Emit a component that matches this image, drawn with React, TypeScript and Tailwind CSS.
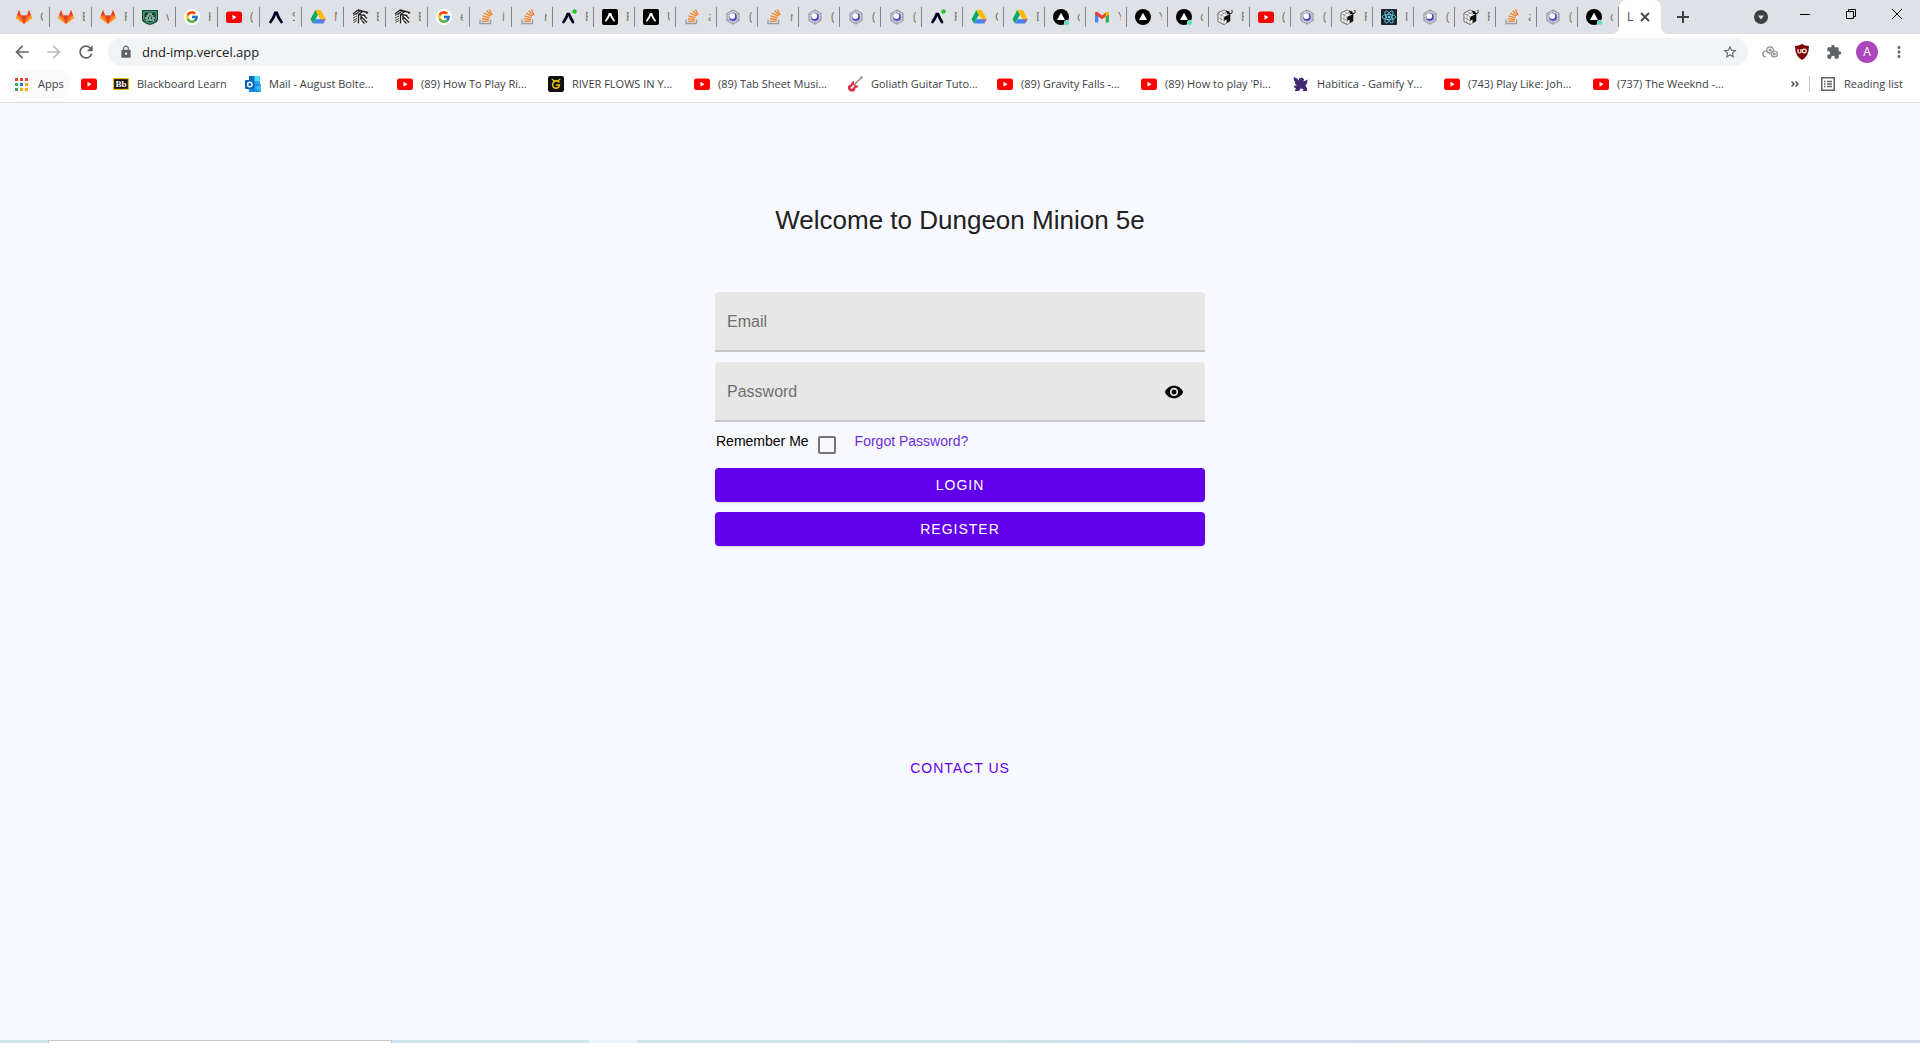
import type { ReactNode } from "react";
import { FcGoogle } from "react-icons/fc";
import { MdArrowBack, MdArrowForward, MdRefresh, MdLock, MdStarBorder, MdExtension, MdMoreVert, MdVisibility } from "react-icons/md";

type IconName =
  | "gitlab" | "shield" | "google" | "youtube" | "expo" | "expoDot" | "expoDark" | "drive" | "notebook"
  | "stack" | "hex" | "vercel" | "vercelDot" | "gmail" | "cube" | "react" | "blackboard" | "outlook"
  | "gtabs" | "guitar" | "griffin";

const drawings: Record<Exclude<IconName, "google">, ReactNode> = {
  gitlab: (
    <>
      <path d="M8 15 L0 9 L3 1 L5 6.5 H11 L13 1 L16 9 Z" fill="#fc6d26" />
      <path d="M8 15 L5 6.5 H11 Z" fill="#e24329" />
      <path d="M0 9 L1 6.5 L8 15 Z M16 9 L15 6.5 L8 15 Z" fill="#fca326" />
      <path d="M3 1 L5 6.5 H1 Z M13 1 L11 6.5 H15 Z" fill="#e24329" />
    </>
  ),
  shield: (
    <>
      <path d="M0 1 H16 V11 Q15 14 8 16 Q1 14 0 11 Z" fill="#064e32" />
      <path d="M1.800 2.800 H14.200 V10.500 Q13 12.800 8 14.200 Q3 12.800 1.800 10.500 Z" fill="none" stroke="#cfe0d8" strokeWidth=".6" />
      <path d="M6 5 H10 M4.500 7 H7.500 M8.500 7 H11.500 M3 9 H6 M7 9 H9 M10 9 H13 M4 11 H12" stroke="#fff" strokeWidth="1.200" />
    </>
  ),
  youtube: (
    <>
      <rect x="0" y="2.500" width="16" height="11.500" rx="2.500" fill="#f00" />
      <path d="M6.500 5.700 L10.500 8.200 L6.500 10.700 Z" fill="#fff" />
    </>
  ),
  expo: <path d="M2.500 13 Q6 8.500 7.200 4 H8.800 Q10 8.500 13.500 13" fill="none" stroke="#000020" strokeWidth="2.800" strokeLinecap="round" />,
  expoDot: (
    <>
      <path d="M2.500 13 Q5.500 9 6.700 5 H8 Q9.500 9 12 13" fill="none" stroke="#000020" strokeWidth="2.700" strokeLinecap="round" />
      <circle cx="13.500" cy="2.500" r="2.200" fill="#2bbf2b" />
    </>
  ),
  expoDark: (
    <>
      <rect width="16" height="16" rx="2" fill="#000" />
      <path d="M4 11.500 Q6.500 8.500 7.500 5 H8.500 Q9.500 8.500 12 11.500" fill="none" stroke="#fff" strokeWidth="1.900" strokeLinecap="round" />
    </>
  ),
  drive: (
    <>
      <path d="M5.300 1 L8 5.800 L3 14.500 L.5 10.200 Z" fill="#0da960" />
      <path d="M5.300 1 H10.700 L15.700 10.200 H10.500 Z" fill="#ffba00" />
      <path d="M5.500 10.200 H15.700 L13.200 14.500 H3 Z" fill="#4285f4" />
      <path d="M10.500 10.200 H15.700 L13.200 14.500 Z" fill="#ea4335" opacity=".35" />
    </>
  ),
  notebook: (
    <>
      <path d="M1 5 L6 1 L15.500 3.500 L15 12 L10 15.500 L1 13 Z" fill="#f4f4f4" />
      <path d="M1 5 L6 1 M3.500 5.500 L8.500 1.500 M6 6 L11 2.300 M6 1 L15.500 3.500 L14.500 5" fill="none" stroke="#222" strokeWidth="1.300" />
      <path d="M1 6.500 L5 4.500 M1 9 L5 7 M1 11.500 L5 9.500 M1.500 13.500 L5 11.500" stroke="#333" strokeWidth="1" />
      <path d="M6 5.500 L13.500 6.500 M6.500 6 V14.500 M9 7 L9 11 M9.500 8 L15 13.500 M9.500 11.500 L12.500 14.500 M12.500 7 L15 9.500" fill="none" stroke="#222" strokeWidth="1.400" />
    </>
  ),
  stack: (
    <>
      <path d="M2 10.500 V14.500 H12.500 V10.500" fill="none" stroke="#9aa0a6" strokeWidth="1.400" />
      <path d="M4 12.200 H10.700 M4 9.700 L10.900 10.600 M4.500 6.900 L11.300 8.900 M6 4 L12 7.300 M8.800 1.800 L13 6.600 M11.500 .5 L14 6" stroke="#f48024" strokeWidth="1.300" />
    </>
  ),
  hex: (
    <>
      <path d="M8 1 L14 4.500 V11.500 L8 15 L2 11.500 V4.500 Z" fill="#d3d5e2" stroke="#9d9fae" strokeWidth="1.300" />
      <path d="M8 1 V4 M14 4.500 L11.500 6 M14 11.500 L11.500 10 M8 15 V12 M2 11.500 L4.500 10 M2 4.500 L4.500 6" stroke="#9d9fae" strokeWidth=".8" />
      <circle cx="8" cy="8" r="4" fill="#4a37cf" stroke="#8c8ca6" strokeWidth=".8" />
      <circle cx="7.300" cy="7.100" r="2.900" fill="#fff" />
    </>
  ),
  vercel: (
    <>
      <circle cx="8" cy="8" r="8" fill="#000" />
      <path d="M8 3.800 L12 11 H4 Z" fill="#fff" />
    </>
  ),
  vercelDot: (
    <>
      <circle cx="8" cy="8" r="8" fill="#000" />
      <path d="M8 3.800 L12 11 H4 Z" fill="#fff" />
      <circle cx="13.800" cy="13.800" r="2.800" fill="#dee1e6" />
      <circle cx="13.800" cy="13.800" r="2.200" fill="#50e3c2" />
    </>
  ),
  gmail: (
    <>
      <path d="M1 3.500 L4.300 5.500 V13.500 H2 Q1 13.500 1 12.500 Z" fill="#4285f4" />
      <path d="M15 3.500 L11.700 5.500 V13.500 H14 Q15 13.500 15 12.500 Z" fill="#34a853" />
      <path d="M1 4 Q1.500 2 3.500 3 L8 6.500 L12.500 3 V7 L8 10.300 L1 5.500 Z" fill="#ea4335" />
      <path d="M11.700 3.500 Q14.500 1.500 15 4 V5.500 L11.700 7.800 Z" fill="#fbbc04" />
    </>
  ),
  cube: (
    <>
      <path d="M1 4 L7 1 L13 4 V12 L7 15.500 L1 12.500 Z" fill="#fff" stroke="#444" strokeWidth=".8" />
      <path d="M7 8 L13 5 V12 L7 15.500 Z" fill="#111" />
      <path d="M7 12 L9.500 10.500 V14 L7 15.500 Z" fill="#fff" />
      <path d="M1 4.500 L7 7.500 V15 M4 2.500 L10 6 M1 8.500 L7 11.500 M4 6 V14 M10 2.500 L4 6" fill="none" stroke="#777" strokeWidth=".7" />
      <path d="M9 1.500 Q12 3 15.500 1 V4 Q13 6 10 5 Z" fill="#111" />
      <circle cx="13.500" cy="2.800" r="1.200" fill="#fff" />
    </>
  ),
  react: (
    <>
      <rect width="16" height="16" rx="1" fill="#20232a" />
      <g fill="none" stroke="#61dafb" strokeWidth=".8">
        <ellipse cx="8" cy="8" rx="6.800" ry="2.600" />
        <ellipse cx="8" cy="8" rx="6.800" ry="2.600" transform="rotate(60 8 8)" />
        <ellipse cx="8" cy="8" rx="6.800" ry="2.600" transform="rotate(120 8 8)" />
      </g>
      <circle cx="8" cy="8" r="1.300" fill="#61dafb" />
    </>
  ),
  blackboard: (
    <>
      <rect x=".6" y="2.600" width="14.800" height="10.800" fill="#111" stroke="#e8b321" strokeWidth="1.200" />
      <text x="8" y="11.200" textAnchor="middle" fontFamily="Liberation Serif, serif" fontWeight="700" fontSize="9" fill="#fff">Bb</text>
    </>
  ),
  outlook: (
    <>
      <path d="M4 0 H15 V9 H4 Z" fill="#28a8ea" />
      <path d="M4 0 H9.500 V5 H4 Z" fill="#0a6cbd" />
      <path d="M9.500 0 H15 V5 H9.500 Z" fill="#50d9ff" />
      <path d="M3 8 H16 V16 H4 Z" fill="#1490df" />
      <path d="M16 8 V16 L9 12 Z" fill="#32b8f0" />
      <rect x="0" y="4" width="9.500" height="9" rx="1" fill="#0364b8" />
      <circle cx="4.800" cy="8.500" r="2.200" fill="none" stroke="#fff" strokeWidth="1.400" />
    </>
  ),
  gtabs: (
    <>
      <rect width="16" height="16" rx="2" fill="#111" />
      <path d="M12 3 Q11 5 8 5 Q5 5 4 3 M11.500 6.300 Q9.500 4.500 7 5.300 Q4.300 6.500 4.500 9.200 Q5 12.300 8 12.300 Q11 12.300 11.500 9 H8" fill="none" stroke="#f4c20d" strokeWidth="1.400" />
    </>
  ),
  guitar: (
    <>
      <path d="M1 10.500 Q2 8.500 4 8.500 Q4 5.500 7 5 L7 7.500 L9 9.500 L11.500 9.500 Q11 12 8.500 12 Q8.500 15.500 5 15.800 Q.5 15.500 1 10.500 Z" fill="#dd2e44" />
      <path d="M14.500 1.500 L5.500 10.500" stroke="#a98d7e" strokeWidth="1.600" />
      <path d="M12.800 1.500 L14.500 0 L16 1.500 L14.500 3" fill="#8d8d8d" />
      <path d="M4 12.500 L7 9.500" stroke="#eee" strokeWidth="2" />
    </>
  ),
  griffin: (
    <path d="M.5 1 Q4 1.500 6 4.500 V2.500 L9 1.500 L11 3 L10.500 5.500 L14.500 3.500 Q14.800 7.500 12.500 9.500 L14 12.500 V15 H9.500 L10.500 13 L7.500 12.500 L6 15 H1.500 L3 12.500 L.5 11 L2 9.500 L4 9.500 Q1.500 8 2 6 Q.5 4 .5 1 Z" fill="#432874" />
  ),
};

function Icon({ name }: { name: IconName }) {
  if (name === "google") {
    return (
      <span className="grid size-4 shrink-0 place-items-center rounded-full bg-white">
        <FcGoogle className="size-3.5" />
      </span>
    );
  }
  return (
    <svg viewBox="0 0 16 16" className="size-4 shrink-0 overflow-visible" aria-hidden="true">
      {drawings[name]}
    </svg>
  );
}

const tabs: [IconName, string][] = [
  ["gitlab", "C"], ["gitlab", "E"], ["gitlab", "F"], ["shield", "v"], ["google", "H"], ["youtube", "("],
  ["expo", "S"], ["drive", "M"], ["notebook", "E"], ["notebook", "E"], ["google", "e"], ["stack", "i"],
  ["stack", "r"], ["expoDot", "F"], ["expoDark", "F"], ["expoDark", "U"], ["stack", "a"], ["hex", "("],
  ["stack", "r"], ["hex", "("], ["hex", "("], ["hex", "("], ["expoDot", "F"], ["drive", "C"],
  ["drive", "D"], ["vercelDot", "d"], ["gmail", "Y"], ["vercel", "Y"], ["vercelDot", "d"], ["cube", "F"],
  ["youtube", "("], ["hex", "("], ["cube", "F"], ["react", "I"], ["hex", "("], ["cube", "F"],
  ["stack", "a"], ["hex", "("], ["vercelDot", "d"],
];

const bookmarks: { icon: IconName; label: string; width: string }[] = [
  { icon: "blackboard", label: "Blackboard Learn", width: "w-[92px]" },
  { icon: "outlook", label: "Mail - August Bolte...", width: "w-[112px]" },
  { icon: "youtube", label: "(89) How To Play Ri...", width: "w-[111px]" },
  { icon: "gtabs", label: "RIVER FLOWS IN Y...", width: "w-[106px]" },
  { icon: "youtube", label: "(89) Tab Sheet Musi...", width: "w-[113px]" },
  { icon: "guitar", label: "Goliath Guitar Tuto...", width: "w-[110px]" },
  { icon: "youtube", label: "(89) Gravity Falls -...", width: "w-[104px]" },
  { icon: "youtube", label: "(89) How to play 'Pi...", width: "w-[112px]" },
  { icon: "griffin", label: "Habitica - Gamify Y...", width: "w-[111px]" },
  { icon: "youtube", label: "(743) Play Like: Joh...", width: "w-[109px]" },
  { icon: "youtube", label: "(737) The Weeknd -...", width: "w-[113px]" },
];

function TabStrip() {
  return (
    <div className="flex h-[34px] items-stretch bg-[#dee1e6] pl-2">
      {tabs.map(([icon, letter], i) => (
        <button key={i} className={`flex shrink-0 items-center pl-2 ${i < 12 ? "w-[42px]" : "w-[41px]"}`}>
          <Icon name={icon} />
          <span className="ml-2 w-[3px] overflow-hidden text-left text-xs text-[#77736f]">{letter}</span>
          <span className="ml-auto h-5 w-px bg-[#808387]" />
        </button>
      ))}
      <div className="relative flex w-[42px] shrink-0 items-center rounded-t-lg bg-white pl-2 text-xs text-[#45494d]">
        <svg viewBox="0 0 8 8" className="absolute bottom-0 -left-2 size-2" aria-hidden="true"><path d="M8 0 V8 H0 Q8 8 8 0 Z" fill="#fff" /></svg>
        <svg viewBox="0 0 8 8" className="absolute -right-2 bottom-0 size-2" aria-hidden="true"><path d="M0 0 V8 H8 Q0 8 0 0 Z" fill="#fff" /></svg>
        <span className="w-[5px]">L</span>
        <button aria-label="Close tab" className="ml-2">
          <svg viewBox="0 0 10 10" className="size-2.5"><path d="M1 1 L9 9 M9 1 L1 9" stroke="#45494d" strokeWidth="1.800" /></svg>
        </button>
      </div>
      <button aria-label="New tab" className="ml-4 self-center">
        <svg viewBox="0 0 12 12" className="size-3"><path d="M6 0 V12 M0 6 H12" stroke="#3c4043" strokeWidth="2" /></svg>
      </button>
      <div className="ml-auto flex items-center">
        <button aria-label="Search tabs" className="mr-8">
          <svg viewBox="0 0 14 14" className="size-3.5"><circle cx="7" cy="7" r="7" fill="#3c4043" /><path d="M4 5.500 H10 L7 9.500 Z" fill="#dee1e6" /></svg>
        </button>
        <button aria-label="Minimize" className="mr-9 mb-1.5">
          <svg viewBox="0 0 10 10" className="size-2.5"><path d="M0 5.500 H10" stroke="#000" /></svg>
        </button>
        <button aria-label="Restore" className="mr-9 mb-1.5">
          <svg viewBox="0 0 10 10" className="size-2.5" fill="none" stroke="#000"><path d="M.5 2.500 H7.500 V9.500 H.5 Z M2.500 2.500 V.5 H9.500 V7.500 H7.500" /></svg>
        </button>
        <button aria-label="Close" className="mr-[18px] mb-1.5">
          <svg viewBox="0 0 10 10" className="size-2.5"><path d="M0 0 L10 10 M10 0 L0 10" stroke="#000" /></svg>
        </button>
      </div>
    </div>
  );
}

function Toolbar() {
  return (
    <div className="flex h-9 items-center text-[#5f6368]">
      <button aria-label="Back" className="ml-3"><MdArrowBack className="size-5" /></button>
      <button aria-label="Forward" className="ml-3 text-[#babcbe]"><MdArrowForward className="size-5" /></button>
      <button aria-label="Reload" className="ml-3"><MdRefresh className="size-5" /></button>
      <div className="ml-3 flex h-7 flex-1 items-center rounded-full bg-[#f1f3f4] pr-2.5 pl-[11px]">
        <MdLock className="size-3.5" />
        <input aria-label="Address" defaultValue="dnd-imp.vercel.app" className="ml-[9px] h-7 flex-1 bg-transparent text-[13px] text-[#202124] outline-none" />
        <button aria-label="Bookmark this page"><MdStarBorder className="size-4" /></button>
      </div>
      <button aria-label="Cloud extension" className="ml-3.5">
        <svg viewBox="0 0 16 12" className="h-3 w-4" fill="none" stroke="#8a8d91" strokeWidth="1.200">
          <path d="M4 11 Q.8 10.500 .8 8 Q1 5 4 5 Q6 5.200 6.200 7.500" /><circle cx="8" cy="4" r="3.200" /><circle cx="12.300" cy="8" r="3" /><circle cx="12.300" cy="8" r=".9" /><circle cx="8" cy="4" r=".9" />
        </svg>
      </button>
      <button aria-label="uBlock" className="ml-4">
        <svg viewBox="0 0 16 16" className="size-4">
          <path d="M8 0 Q11 2 15 2 Q15 12 8 16 Q1 12 1 2 Q5 2 8 0 Z" fill="#800000" />
          <path d="M4 5 V7.500 Q4 9 5.500 9 Q7 9 7 7.500 V5" fill="none" stroke="#fff" strokeWidth="1.200" />
          <circle cx="10.300" cy="7" r="1.900" fill="none" stroke="#fff" strokeWidth="1.200" />
        </svg>
      </button>
      <button aria-label="Extensions" className="ml-4"><MdExtension className="size-4" /></button>
      <button aria-label="Profile" className="ml-3.5 grid size-[22px] place-items-center rounded-full bg-[#ab47bc] text-xs text-white">A</button>
      <button aria-label="Menu" className="mr-3 ml-3"><MdMoreVert className="size-[18px]" /></button>
    </div>
  );
}

function BookmarkBar() {
  return (
    <nav aria-label="Bookmarks" className="flex h-[33px] items-center border-b border-[#dadce0] pr-3.5 pb-1 text-[11px] whitespace-nowrap text-[#3c4043]">
      <a href="#apps" className="ml-2 flex h-7 w-[62px] shrink-0 items-center gap-2.5 rounded-full bg-[#fafafa] pl-[7px]">
        <svg viewBox="0 0 13 13" className="size-[13px]" aria-hidden="true">
          <path d="M0 0h3v3H0zM5 0h3v3H5zM10 0h3v3h-3z" fill="#ea4335" />
          <path d="M0 5h3v3H0zM0 10h3v3H0z" fill="#34a853" />
          <path d="M5 5h3v3H5z" fill="#1a73e8" />
          <path d="M10 5h3v3h-3zM5 10h3v3H5zM10 10h3v3h-3z" fill="#fbab05" />
        </svg>
        Apps
      </a>
      <a href="#youtube" aria-label="YouTube" className="ml-[11px]"><Icon name="youtube" /></a>
      {bookmarks.map(({ icon, label, width }) => (
        <a key={label} href="#bookmark" className="ml-4 flex shrink-0 items-center gap-2">
          <Icon name={icon} />
          <span className={width}>{label}</span>
        </a>
      ))}
      <button aria-label="More bookmarks" className="ml-auto">
        <svg viewBox="0 0 8 6" className="h-1.5 w-2" fill="none" stroke="#4d5156" strokeWidth="1.500"><path d="M.5 .5 L3 3 L.5 5.500 M4.500 .5 L7 3 L4.500 5.500" /></svg>
      </button>
      <span className="ml-2.5 h-4 w-px bg-[#c6c8ca]" />
      <button className="ml-[11px] flex items-center gap-[9px]">
        <svg viewBox="0 0 14 14" className="size-3.5" fill="none" stroke="#5f6368" strokeWidth="1.500" aria-hidden="true">
          <rect x=".8" y=".8" width="12.400" height="12.400" /><path d="M3 4.500 H4.500 M3 7 H4.500 M3 9.500 H4.500 M6 4.500 H11 M6 7 H11 M6 9.500 H11" strokeWidth="1.300" />
        </svg>
        <span className="w-[62px] text-left">Reading list</span>
      </button>
    </nav>
  );
}

const fieldClass = "h-[60px] w-full rounded-t border-b-2 border-[#c6c6c8] bg-[#e7e7e7] px-3 pt-0.5 text-base text-black outline-none placeholder:text-[#6f6f6f]";
const buttonClass = "h-[34px] w-full rounded bg-[#6200ee] text-sm tracking-[1px] text-white shadow";

export default function App() {
  return (
    <div className="flex min-h-screen flex-col bg-[#f8f9ff] font-['Liberation_Sans',Arial,sans-serif]">
      <header className="bg-white font-['Open_Sans','Noto_Sans',sans-serif]">
        <TabStrip />
        <Toolbar />
        <BookmarkBar />
      </header>
      <main className="flex flex-1 flex-col items-center">
        <h1 className="mt-[101px] text-[26px] leading-8 text-[#212121]">Welcome to Dungeon Minion 5e</h1>
        <form className="mt-14 flex w-[490px] max-w-full flex-col gap-2.5" onSubmit={(e) => e.preventDefault()}>
          <input type="email" aria-label="Email" placeholder="Email" className={fieldClass} />
          <div className="relative">
            <input type="password" aria-label="Password" placeholder="Password" className={fieldClass} />
            <button type="button" aria-label="Show password" className="absolute top-5 right-[21px]"><MdVisibility className="size-5" /></button>
          </div>
          <div className="flex h-[26px] text-sm leading-[18px]">
            <label htmlFor="remember" className="pl-px">Remember Me</label>
            <input id="remember" type="checkbox" className="mt-1 ml-[9px] size-[18px] appearance-none rounded-xs border-2 border-[#757575] checked:bg-[#6200ee]" />
            <a href="#forgot" className="ml-[19px] text-[#6a2fd8]">Forgot Password?</a>
          </div>
          <button type="submit" className={buttonClass}>LOGIN</button>
          <button type="button" className={buttonClass}>REGISTER</button>
        </form>
        <a href="#contact" className="mt-[212px] text-sm tracking-[1px] text-[#6200ee]">CONTACT US</a>
      </main>
      <footer className="flex h-[3px] bg-linear-to-r from-[#cde7ee] from-30% to-[#d3d9e9] pl-12">
        <div className="w-[344px] border border-b-0 border-[#c8c8cc] bg-white" />
        <div className="ml-[197px] w-12 bg-[#ecf3f9]" />
      </footer>
    </div>
  );
}
